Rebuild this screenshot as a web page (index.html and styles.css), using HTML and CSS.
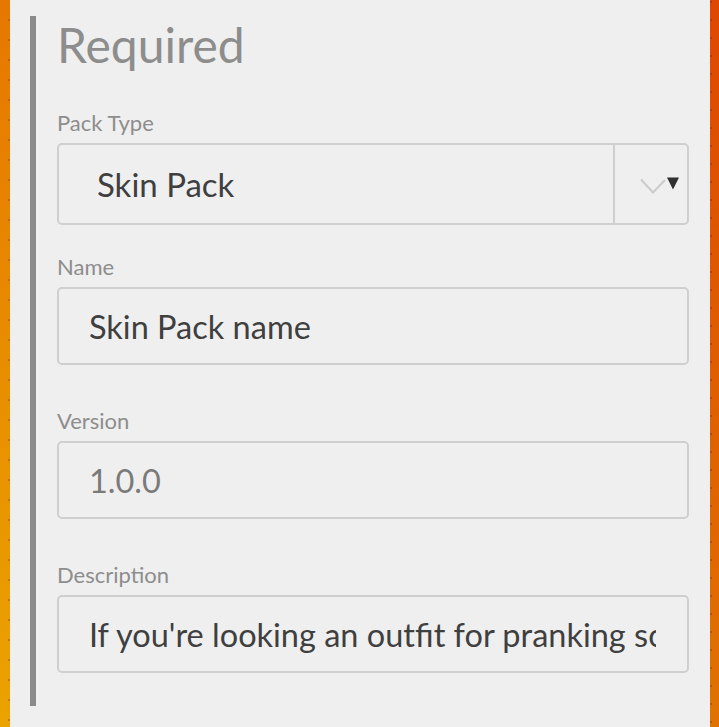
FILE: index.html
```html
<!DOCTYPE html>
<html>
<head>
<meta charset="utf-8">
<link rel="stylesheet" href="styles.css">
</head>
<body>
<div class="panel">
  <div class="section">
    <h2 class="title">Required</h2>
    <div class="field field-first">
      <div class="label">Pack Type</div>
      <div class="select">
        <div class="select-value">Skin Pack</div>
        <div class="select-arrow">
          <svg width="42" height="24" viewBox="0 0 42 24">
            <path d="M1 7.5 L13 20.5 L25 8" fill="none" stroke="#cbcbcb" stroke-width="2"/>
            <path d="M27 5.5 L39 5.5 L33 17.5 Z" fill="#2f2f2f"/>
          </svg>
        </div>
      </div>
    </div>
    <div class="field field-name">
      <div class="label">Name</div>
      <div class="input">Skin Pack name</div>
    </div>
    <div class="field">
      <div class="label">Version</div>
      <div class="input placeholder">1.0.0</div>
    </div>
    <div class="field">
      <div class="label">Description</div>
      <div class="input"><span class="clip">If you're looking an outfit for pranking someone, this pack is for you!</span></div>
    </div>
  </div>
</div>
</body>
</html>
```

FILE: styles.css
```css
html, body {
  margin: 0;
  padding: 0;
}
body {
  height: 727px;
  overflow: hidden;
  font-family: "Lato", "Open Sans", sans-serif;
  background:
    repeating-linear-gradient(to bottom, transparent 0 18px, rgba(120, 50, 0, 0.35) 18px 20px) 8px 1px / 2px 100% no-repeat,
    repeating-linear-gradient(to bottom, transparent 0 1px, rgba(120, 30, 0, 0.35) 1px 3px, transparent 3px 18px) 710px 0 / 2px 100% no-repeat,
    linear-gradient(to bottom, #e67700, #eaa300) 0 0 / 10px 100% no-repeat,
    linear-gradient(to bottom, #df4700, #df7300) 710px 0 / 9px 100% no-repeat,
    #e67700;
}
.panel {
  margin: 0 9px 0 10px;
  height: 727px;
  background: #efefef;
  padding-top: 16px;
  box-sizing: border-box;
}
.section {
  margin-left: 20px;
  border-left: 6px solid #8a8a8a;
  padding: 0 21px 0 21px;
  height: 690px;
  box-sizing: border-box;
}
.title {
  margin: 0;
  font-weight: 400;
  font-size: 48px;
  line-height: 58px;
  color: #8d8d8d;
}
.field {
  margin-top: 44px;
}
.field-first {
  margin-top: 37px;
}
.field-name {
  margin-top: 30px;
}
.label {
  font-size: 22px;
  line-height: 24px;
  color: #8d8d8d;
  margin-bottom: 8px;
}
.select {
  display: flex;
  height: 82px;
  border: 2px solid #cfcfcf;
  border-radius: 5px;
  box-sizing: border-box;
}
.select-value {
  flex: 1;
  display: flex;
  align-items: center;
  padding-left: 38px;
  font-size: 33px;
  color: #3f3f3f;
  border-right: 2px solid #cfcfcf;
}
.select-arrow {
  width: 72px;
  display: flex;
  align-items: center;
  justify-content: flex-end;
  padding-right: 5px;
  box-sizing: border-box;
}
.input {
  height: 78px;
  border: 2px solid #cfcfcf;
  border-radius: 5px;
  box-sizing: border-box;
  padding: 0 31px 0 30px;
  display: flex;
  align-items: center;
  font-size: 32.5px;
  color: #3f3f3f;
  overflow: hidden;
  white-space: nowrap;
}
.input.placeholder {
  color: #7a7a7a;
}
.clip {
  display: block;
  overflow: hidden;
  white-space: nowrap;
}
```
